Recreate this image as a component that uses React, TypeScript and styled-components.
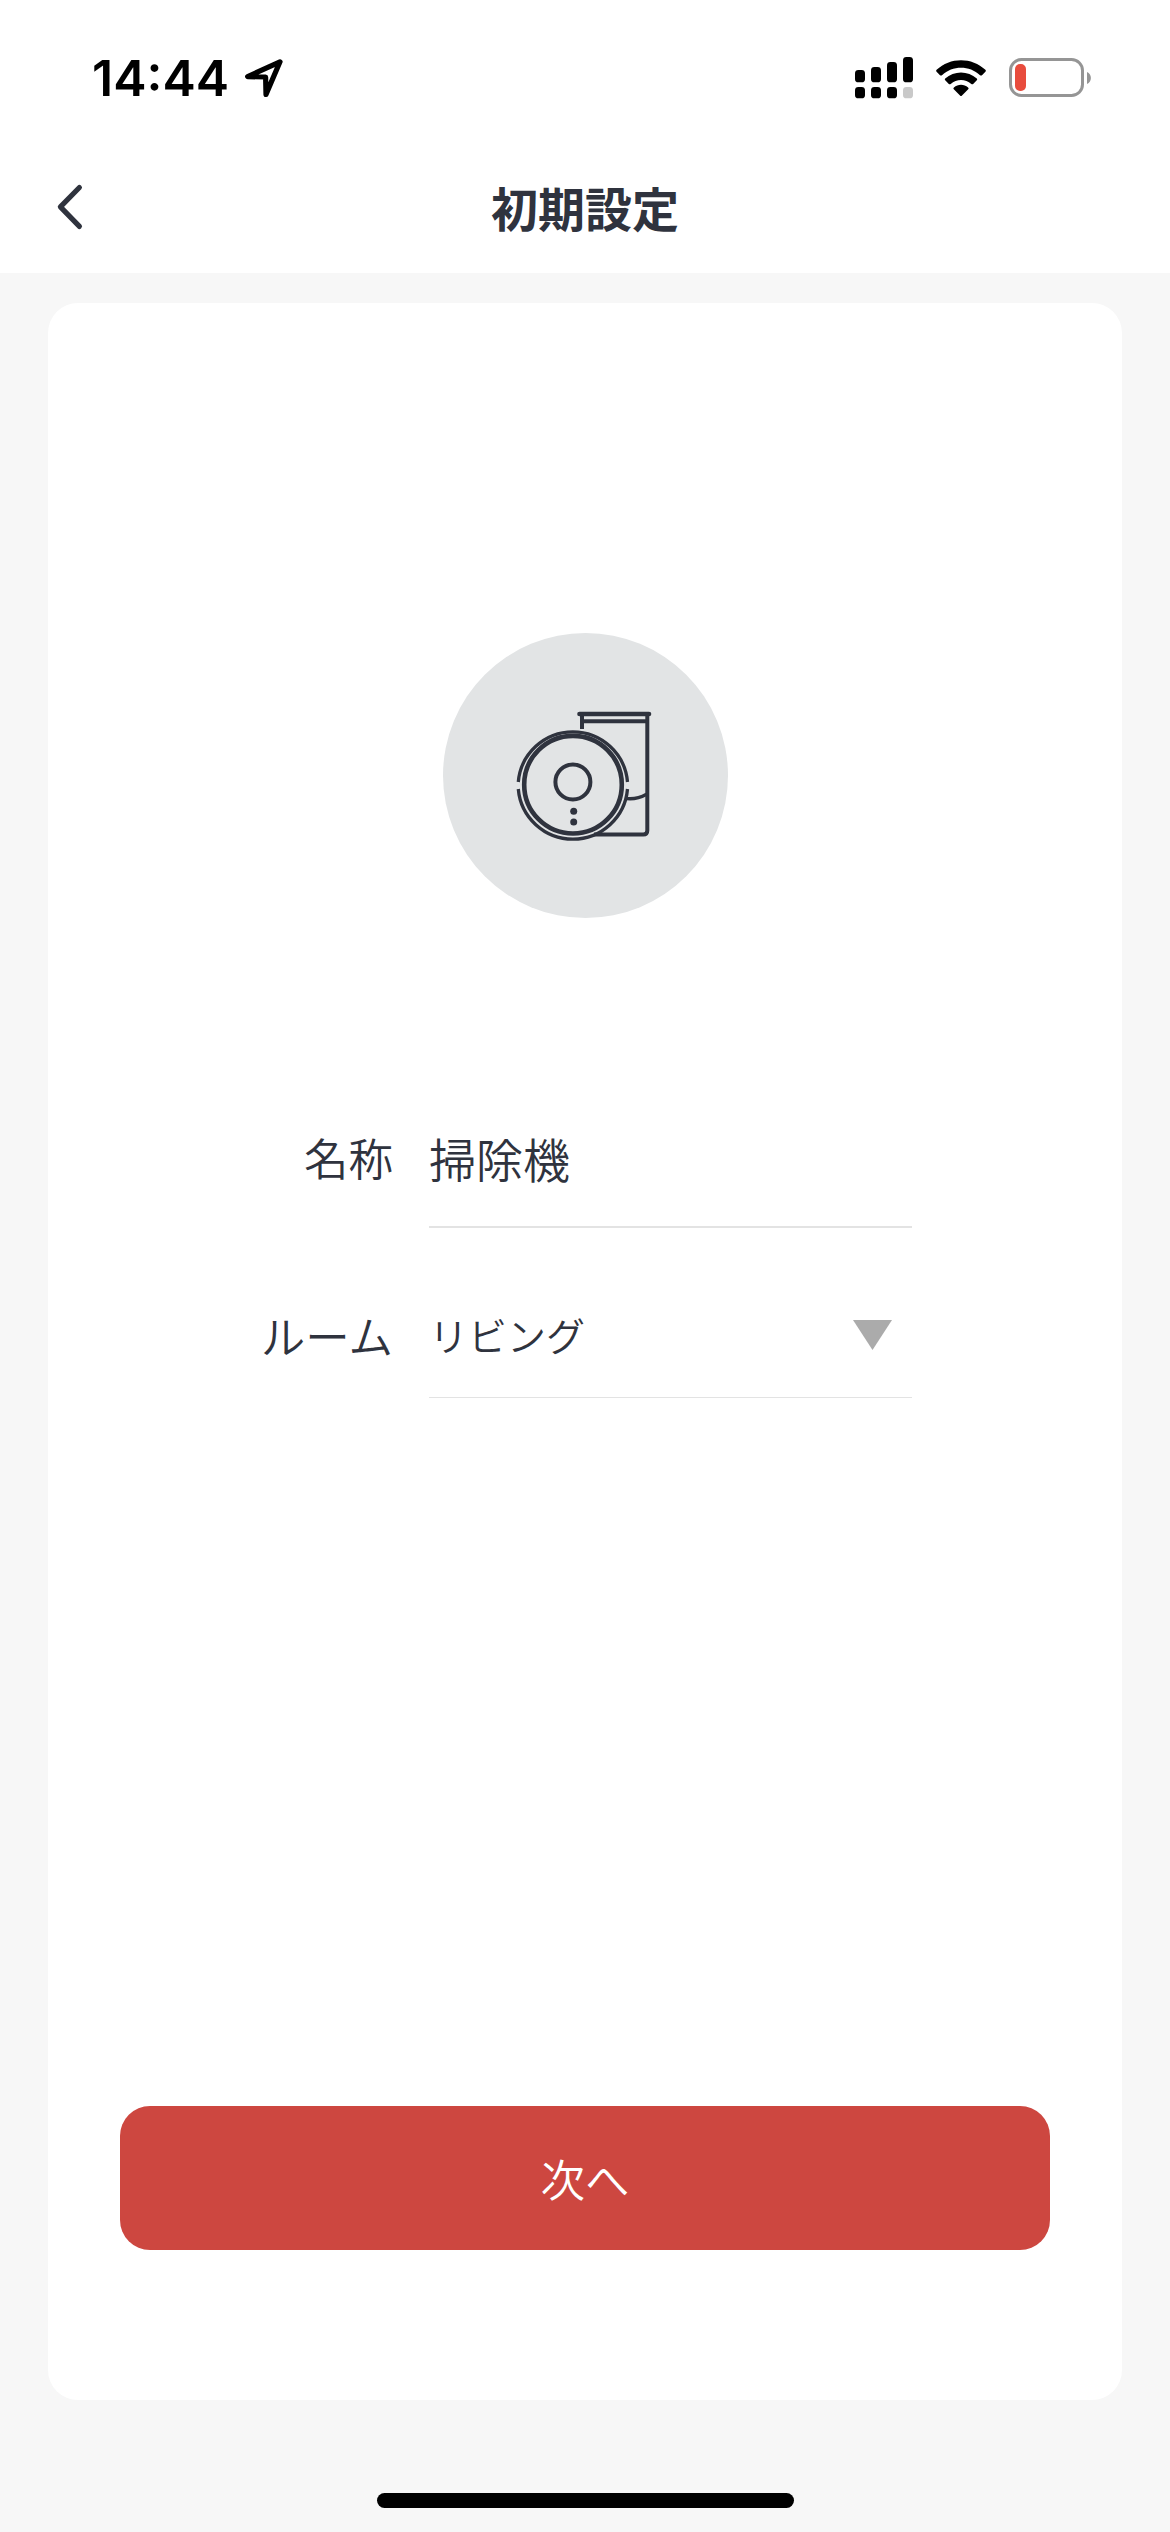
import React from "react";
import styled, { createGlobalStyle } from "styled-components";

const ink = "#2f333e";

const GlobalStyle = createGlobalStyle`
  *, *::before, *::after { box-sizing: border-box; }
  html, body { margin: 0; padding: 0; background: #f7f7f7; }
  body { font-family: Inter, "Noto Sans CJK JP", sans-serif; color: ${ink}; }
  svg { display: block; flex: none; }
`;

const Screen = styled.div`
  width: 1170px;
  height: 2532px;
  display: flex;
  flex-direction: column;
  background: #f7f7f7;
  overflow: hidden;
`;

const TopArea = styled.header`
  height: 273px;
  flex: none;
  background: #fff;
`;

const StatusBar = styled.div`
  height: 140px;
  display: flex;
  justify-content: space-between;
  align-items: flex-start;
  padding: 48px 78px 0 92px;
`;

const StatusGroup = styled.div<{ $gap: number }>`
  display: flex;
  align-items: center;
  gap: ${(p) => p.$gap}px;
  height: 60px;
`;

const Clock = styled.span`
  width: 137px;
  font: 600 50px/60px Inter, sans-serif;
  color: #000;
  white-space: nowrap;
`;

const NavBar = styled.nav`
  height: 133px;
  display: grid;
  grid-template-columns: 200px 1fr 200px;
  align-items: center;
`;

const BackButton = styled.button`
  border: 0;
  background: none;
  padding: 0 0 0 54px;
  justify-self: start;
`;

const Title = styled.h1`
  margin: 0;
  text-align: center;
  font: 700 47px/70px "Noto Sans CJK JP", sans-serif;
`;

const Card = styled.main`
  margin: 30px 48px 0;
  height: 2097px;
  border-radius: 30px;
  background: #fff;
  padding: 330px 72px 150px;
  display: flex;
  flex-direction: column;
  align-items: center;
`;

const DeviceBadge = styled.div`
  width: 285px;
  height: 285px;
  border-radius: 50%;
  background: #e2e4e5;
  display: flex;
  align-items: center;
  justify-content: center;
`;

const Form = styled.div`
  width: 100%;
  margin-top: 171px;
  padding-right: 138px;
  display: flex;
  flex-direction: column;
`;

const FieldRow = styled.div<{ $height: number }>`
  height: ${(p) => p.$height}px;
  display: grid;
  grid-template-columns: 273px 483px;
  column-gap: 36px;
`;

const Label = styled.span<{ $top: number }>`
  padding-top: ${(p) => p.$top}px;
  text-align: right;
  font: 350 44.5px/64px "Noto Sans CJK JP", sans-serif;
`;

const Field = styled.div<{ $top: number; $line: number }>`
  display: flex;
  justify-content: space-between;
  align-items: flex-start;
  padding: ${(p) => p.$top}px 20px 0 0;
  border-bottom: ${(p) => p.$line}px solid #e3e3e3;
`;

const Value = styled.span<{ $size: number }>`
  font: 350 ${(p) => p.$size}px/64px "Noto Sans CJK JP", sans-serif;
  white-space: nowrap;
`;

const Caret = styled.span`
  margin-top: 18px;
  width: 39px;
  height: 30px;
  background: #ababab;
  clip-path: polygon(0 0, 100% 0, 50% 100%);
`;

const NextButton = styled.button`
  margin-top: auto;
  width: 930px;
  height: 144px;
  border: 0;
  border-radius: 30px;
  padding: 0;
  background: #cd4740;
  color: #fff;
  font: 350 44.5px/64px "Noto Sans CJK JP", sans-serif;
`;

const HomeIndicator = styled.div`
  margin: 93px auto 0 377px;
  width: 417px;
  height: 15px;
  border-radius: 8px;
  background: #000;
`;

const LocationIcon = () => (
  <svg width="40" height="40" viewBox="0 0 40 40" fill="none" stroke="#000" strokeWidth="5.2" strokeLinejoin="round">
    <path d="M36 3.8 L3.7 18.6 L21.6 19 L22 36.4 Z" />
  </svg>
);

const SignalIcon = () => (
  <svg width="58" height="42" viewBox="0 0 58 42">
    <rect x="0" y="13" width="10" height="12.3" rx="3.4" />
    <rect x="16" y="10" width="10" height="15.3" rx="3.4" />
    <rect x="32" y="5" width="10" height="20.3" rx="3.4" />
    <rect x="48" y="0" width="10" height="25.3" rx="3.4" />
    <rect x="0" y="30" width="10" height="11.3" rx="3.4" />
    <rect x="16" y="30" width="10" height="11.3" rx="3.4" />
    <rect x="32" y="30" width="10" height="11.3" rx="3.4" />
    <rect x="48" y="30" width="10" height="11.3" rx="3.4" fill="#c9c9c9" />
  </svg>
);

const WifiIcon = () => (
  <svg width="50" height="37" viewBox="0 0 50 37">
    <path d="M0.6 9.8 C14 -3.1 36 -3.1 49.4 9.8 Q50.3 10.8 49.4 11.7 L46 15.2 Q45 16 44 15.2 C33.5 5.3 16.500 5.3 6 15.2 Q5 16 4 15.200 L0.600 11.700 Q-0.300 10.800 0.600 9.800 Z" />
    <path d="M9.200 18.500 C18 10.500 32 10.500 40.800 18.500 Q41.700 19.400 40.800 20.300 L37.200 23.900 Q36.300 24.800 35.300 23.900 C29.500 18.700 20.500 18.700 14.700 23.900 Q13.700 24.800 12.800 23.900 L9.200 20.300 Q8.300 19.400 9.200 18.500 Z" />
    <path d="M17.900 27.400 C22 24 28 24 32.100 27.400 Q33.200 28.300 32.200 29.300 L26 35.600 Q25 36.600 24 35.600 L17.800 29.300 Q16.800 28.300 17.900 27.400 Z" />
  </svg>
);

const BatteryIcon = () => (
  <svg width="83" height="40" viewBox="0 0 83 40">
    <rect x="1.5" y="1.500" width="72" height="36" rx="11" fill="none" stroke="#959595" strokeWidth="3" />
    <rect x="6" y="6" width="11" height="27" rx="5" fill="#e84c3d" />
    <path d="M78 14 C83.200 16 83.200 24 78 26 Z" fill="#959595" />
  </svg>
);

const BackIcon = () => (
  <svg width="32" height="48" viewBox="0 0 32 48" fill="none" stroke={ink} strokeWidth="5.2" strokeLinecap="round" strokeLinejoin="round">
    <path d="M25.400 4.500 L6.400 23.900 L25.400 43.400" />
  </svg>
);

const VacuumIcon = () => (
  <svg width="170" height="170" viewBox="0 0 170 170" fill="none" stroke={ink} strokeWidth="4">
    <path d="M82 24 V38" />
    <path d="M79.500 23 H149" strokeWidth="4.600" strokeLinecap="round" />
    <path d="M82 30.300 H147" />
    <path d="M147.300 24 V139.500 Q147.300 143.500 143.300 143.500 H94" />
    <path d="M127 107.600 Q137 108.600 146.500 103.200" strokeWidth="3.400" />
    <path d="M18.300 91 A54.800 54.800 0 0 1 127.500 91" strokeWidth="3.300" />
    <path d="M18.300 98 A54.800 54.800 0 0 0 127.500 98" strokeWidth="3.300" />
    <circle cx="73" cy="93.700" r="48.800" strokeWidth="4.600" />
    <circle cx="72.900" cy="91" r="17.500" />
    <circle cx="73.700" cy="120.200" r="3.500" fill={ink} stroke="none" />
    <circle cx="73.700" cy="131" r="3.500" fill={ink} stroke="none" />
  </svg>
);

export default function App() {
  return (
    <>
      <GlobalStyle />
      <Screen>
        <TopArea>
          <StatusBar>
            <StatusGroup $gap={15}>
              <Clock>14:44</Clock>
              <LocationIcon />
            </StatusGroup>
            <StatusGroup $gap={23}>
              <SignalIcon />
              <WifiIcon />
              <BatteryIcon />
            </StatusGroup>
          </StatusBar>
          <NavBar>
            <BackButton aria-label="戻る">
              <BackIcon />
            </BackButton>
            <Title>初期設定</Title>
          </NavBar>
        </TopArea>
        <Card>
          <DeviceBadge>
            <VacuumIcon />
          </DeviceBadge>
          <Form>
            <FieldRow $height={139}>
              <Label $top={36}>名称</Label>
              <Field $top={37} $line={2}>
                <Value $size={47}>掃除機</Value>
              </Field>
            </FieldRow>
            <FieldRow $height={170}>
              <Label $top={75}>ルーム</Label>
              <Field $top={74} $line={1}>
                <Value $size={39}>リビング</Value>
                <Caret />
              </Field>
            </FieldRow>
          </Form>
          <NextButton>次へ</NextButton>
        </Card>
        <HomeIndicator />
      </Screen>
    </>
  );
}
